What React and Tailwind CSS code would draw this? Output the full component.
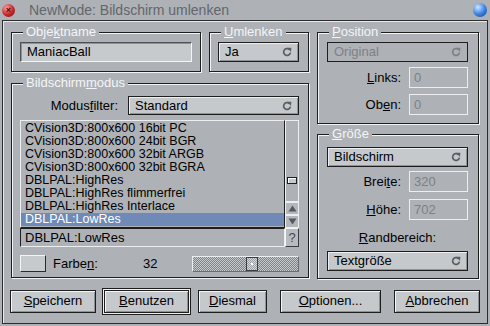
// App.jsx — MUI-style "NewMode: Bildschirm umlenken" window. Static mock, no logic.

const BG = 'bg-[#aeb2b6]'

const modes = [
  'CVision3D:800x600 16bit PC',
  'CVision3D:800x600 24bit BGR',
  'CVision3D:800x600 32bit ARGB',
  'CVision3D:800x600 32bit BGRA',
  'DBLPAL:HighRes',
  'DBLPAL:HighRes flimmerfrei',
  'DBLPAL:HighRes Interlace',
  'DBLPAL:LowRes',
]

function CycleGlyph({ color = '#5b5f64' }) {
  return (
    <svg width="10" height="10" viewBox="0 0 10 10" className="shrink-0">
      <path d="M7.4 2.6A3.4 3.4 0 1 0 8.4 5.6" fill="none" stroke={color} strokeWidth="1.7" />
      <path d="M5.2 0.8L9.4 0.8 9 5Z" fill={color} />
    </svg>
  )
}

function Group({ title, className, children }) {
  return (
    <div className={`relative border border-[#1e1e1e] shadow-[inset_1px_1px_0_#f2f3f4,1px_1px_0_#f2f3f4] ${className}`}>
      <span className={`absolute left-[11px] top-[-8px] ${BG} px-[3px] leading-[14px] text-[#f4f5f6]`}>{title}</span>
      {children}
    </div>
  )
}

function Cycle({ label, disabled, className = '' }) {
  return (
    <div
      className={`flex items-center justify-between border border-[#1e1e1e] pl-[6px] pr-[6px] ${
        disabled
          ? 'bg-[#aeb2b6] text-[#7d8187]'
          : 'bg-[#c5c9cc] shadow-[inset_1px_1px_0_#eceef0,inset_-1px_-1px_0_#8e9297]'
      } ${className}`}
    >
      <span>{label}</span>
      <CycleGlyph color={disabled ? '#7d8187' : '#5b5f64'} />
    </div>
  )
}

function NumBox({ value }) {
  return (
    <div className="flex h-[21px] w-[59px] items-center border border-[#eceef0] pl-[4px] text-[#7d8187]">
      {value}
    </div>
  )
}

function Btn({ className = '', children }) {
  return (
    <div
      className={`flex h-[23px] items-center justify-center border border-[#1e1e1e] bg-[#c5c9cc] shadow-[inset_1px_1px_0_#f4f5f6,inset_-1px_-1px_0_#8e9297] ${className}`}
    >
      {children}
    </div>
  )
}

function Arrow({ up }) {
  return (
    <div className="flex h-[13px] items-center justify-center border border-[#eceef0] bg-[#b4b8bc]">
      <svg width="9" height="7" viewBox="0 0 9 7">
        <path d={up ? 'M4.5 0.5L8.5 6.5 0.5 6.5Z' : 'M0.5 0.5L8.5 0.5 4.5 6.5Z'} fill="#55595e" />
      </svg>
    </div>
  )
}

export default function App() {
  return (
    <div className={`h-[326px] w-[490px] overflow-hidden ${BG} font-['Liberation_Sans',Arial,sans-serif] text-[13px] leading-[14px] text-black`}>
      {/* title bar */}
      <div className="flex h-[20px] items-center pl-[2px] pr-[3px]">
        <div className="flex h-[13px] w-[13px] items-center justify-center rounded-full bg-[radial-gradient(circle_at_35%_30%,#f4a0a0,#c4262a_55%,#6a0e10)] text-[9px] leading-none font-bold text-[#5a0c0c]">
          ×
        </div>
        <span className="ml-[14px] text-[14px] text-[#62666c]">NewMode: Bildschirm umlenken</span>
        <div className="ml-auto h-[14px] w-[14px] rounded-full bg-[radial-gradient(circle_at_35%_30%,#cfe6ff,#3f86e6_50%,#0d3a8a)]" />
      </div>

      {/* window body */}
      <div className="ml-[2px] flex h-[304px] w-[486px] flex-col border border-[#2c2c2c] px-[8px] pt-[11px] pb-[9px] shadow-[inset_1px_1px_0_#e8eaec]">
        <div className="flex gap-[8px]">
          {/* left column */}
          <div className="flex w-[298px] flex-col">
            <div className="flex gap-[8px]">
              <Group title={<>Obje<u>k</u>tname</>} className="w-[190px] px-[8px] py-[9px]">
                <div className="flex h-[20px] items-center border border-t-[#4e5257] border-l-[#4e5257] border-b-[#f4f5f6] border-r-[#f4f5f6] bg-[#c6cacd] pl-[6px] shadow-[inset_1px_1px_0_#8e9297]">
                  ManiacBall
                </div>
              </Group>
              <Group title={<><u>U</u>mlenken</>} className="flex-1 py-[9px] pl-[8px] pr-[9px]">
                <Cycle label="Ja" className="h-[20px]" />
              </Group>
            </div>

            <Group title={<>Bildschirm<u>m</u>odus</>} className="mt-[11px] flex h-[195px] flex-col pl-[8px] pr-[9px] pt-[12px]">
              <div className="flex h-[19px] items-center">
                <span className="flex-1 pr-[10px] text-right">
                  Modus<u>f</u>ilter:
                </span>
                <Cycle label="Standard" className="h-[19px] w-[171px]" />
              </div>

              <div className="mt-[5px] flex h-[108px]">
                <div className="flex-1 border border-t-[#eceef0] border-l-[#eceef0] border-b-[#1e1e1e] border-r-[#1e1e1e] py-[1px] text-[12.5px]">
                  {modes.map((m, i) => (
                    <div
                      key={m}
                      className={`h-[13px] whitespace-pre pl-[4px] leading-[13px] ${
                        i === modes.length - 1 ? 'bg-[#6f8ab6] text-white' : ''
                      }`}
                    >
                      {m}
                    </div>
                  ))}
                </div>
                <div className="flex w-[14px] flex-col">
                  <div className="flex-1 border border-[#eceef0] px-[1px]">
                    <div className="mt-[56px] h-[7px] border border-[#1e1e1e] bg-[#c5c9cc] shadow-[inset_1px_1px_0_#fff]" />
                  </div>
                  <Arrow up />
                  <Arrow />
                </div>
              </div>

              <div className="flex h-[19px]">
                <div className="flex flex-1 items-center border border-t-[#1e1e1e] border-l-[#1e1e1e] border-b-[#eceef0] border-r-[#eceef0] pl-[4px]">
                  DBLPAL:LowRes
                </div>
                <div className="flex w-[14px] items-center justify-center border border-t-[#f4f5f6] border-l-[#f4f5f6] border-b-[#3a3e42] border-r-[#3a3e42] bg-[#b8bcc0] text-[#44484d]">
                  ?
                </div>
              </div>

              <div className="mt-[8px] flex h-[17px] items-center">
                <div className="h-[17px] w-[26px] border border-t-[#f4f5f6] border-l-[#f4f5f6] border-b-[#2a2a2a] border-r-[#2a2a2a] bg-[#c6cacd]" />
                <span className="ml-[7px] w-[90px]">
                  Farbe<u>n</u>:
                </span>
                <span className="w-[49px]">32</span>
                <div className="flex h-[16px] flex-1 items-center border border-t-[#eceef0] border-l-[#eceef0] border-b-[#6a6e73] border-r-[#6a6e73] bg-[repeating-conic-gradient(#7e8287_0_25%,#c8cbce_0_50%)] bg-size-[2px_2px] pl-[53px]">
                  <div className="flex h-[14px] w-[12px] items-center justify-center border border-[#3a3e42] bg-[repeating-conic-gradient(#9a9ea3_0_25%,#d8dbde_0_50%)] bg-size-[2px_2px]">
                    <div className="h-[2px] w-[2px] bg-white" />
                  </div>
                </div>
              </div>
            </Group>
          </div>

          {/* right column */}
          <div className="flex w-[162px] flex-col">
            <Group title={<><u>P</u>osition</>} className="flex h-[92px] flex-col pl-[9px] pr-[10px] pt-[9px]">
              <Cycle label="Original" disabled className="h-[20px]" />
              <div className="mt-[5px] flex h-[21px] items-center justify-end">
                <span className="pr-[8px]">
                  <u>L</u>inks:
                </span>
                <NumBox value="0" />
              </div>
              <div className="mt-[6px] flex h-[21px] items-center justify-end">
                <span className="pr-[8px]">
                  Ob<u>e</u>n:
                </span>
                <NumBox value="0" />
              </div>
            </Group>

            <Group title={<><u>G</u>röße</>} className="mt-[10px] flex h-[145px] flex-col pl-[9px] pr-[10px] pt-[12px]">
              <Cycle label="Bildschirm" className="h-[20px]" />
              <div className="mt-[4px] flex h-[21px] items-center justify-end">
                <span className="pr-[8px]">
                  Brei<u>t</u>e:
                </span>
                <NumBox value="320" />
              </div>
              <div className="mt-[7px] flex h-[21px] items-center justify-end">
                <span className="pr-[8px]">
                  <u>H</u>öhe:
                </span>
                <NumBox value="702" />
              </div>
              <div className="mt-[9px] flex h-[18px] items-center justify-center">
                <span>
                  <u>R</u>andbereich:
                </span>
              </div>
              <Cycle label="Textgröße" className="mt-[4px] h-[20px]" />
            </Group>
          </div>
        </div>

        {/* button row */}
        <div className="-mx-[1px] mt-[9px] flex h-[26px] items-center">
          <Btn className="w-[86px]">
            <span><u>S</u>peichern</span>
          </Btn>
          <div className="ml-[6px] w-[89px] border border-[#1e1e1e] bg-[#eef0f2] p-[1px]">
            <Btn className="h-[22px]">
              <span><u>B</u>enutzen</span>
            </Btn>
          </div>
          <Btn className="ml-[7px] w-[69px]">
            <span><u>D</u>iesmal</span>
          </Btn>
          <Btn className="ml-[13px] w-[101px]">
            <span><u>O</u>ptionen...</span>
          </Btn>
          <Btn className="ml-[13px] w-[86px]">
            <span><u>A</u>bbrechen</span>
          </Btn>
        </div>
      </div>
    </div>
  )
}
